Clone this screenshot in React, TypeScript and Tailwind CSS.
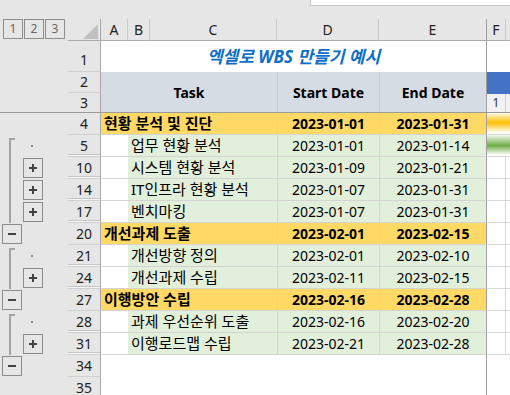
import React from "react";

type Kind = "sum" | "sub" | "empty";
type Out1 = "" | "start" | "line" | "minus";
type Out2 = "" | "plus" | "dot";
type Gantt = "" | "orange" | "green" | "grid";

interface SheetRow {
  n: number;
  kind: Kind;
  task?: string;
  start?: string;
  end?: string;
  o1: Out1;
  o2: Out2;
  hiddenAfter?: boolean;
  gantt: Gantt;
}

const ROWS: SheetRow[] = [
  { n: 4, kind: "sum", task: "현황 분석 및 진단", start: "2023-01-01", end: "2023-01-31", o1: "", o2: "", gantt: "orange" },
  { n: 5, kind: "sub", task: "업무 현황 분석", start: "2023-01-01", end: "2023-01-14", o1: "start", o2: "dot", hiddenAfter: true, gantt: "green" },
  { n: 10, kind: "sub", task: "시스템 현황 분석", start: "2023-01-09", end: "2023-01-21", o1: "line", o2: "plus", hiddenAfter: true, gantt: "grid" },
  { n: 14, kind: "sub", task: "IT인프라 현황 분석", start: "2023-01-07", end: "2023-01-31", o1: "line", o2: "plus", hiddenAfter: true, gantt: "grid" },
  { n: 17, kind: "sub", task: "벤치마킹", start: "2023-01-07", end: "2023-01-31", o1: "line", o2: "plus", hiddenAfter: true, gantt: "grid" },
  { n: 20, kind: "sum", task: "개선과제 도출", start: "2023-02-01", end: "2023-02-15", o1: "minus", o2: "", gantt: "grid" },
  { n: 21, kind: "sub", task: "개선방향 정의", start: "2023-02-01", end: "2023-02-10", o1: "start", o2: "dot", hiddenAfter: true, gantt: "grid" },
  { n: 24, kind: "sub", task: "개선과제 수립", start: "2023-02-11", end: "2023-02-15", o1: "line", o2: "plus", hiddenAfter: true, gantt: "grid" },
  { n: 27, kind: "sum", task: "이행방안 수립", start: "2023-02-16", end: "2023-02-28", o1: "minus", o2: "", gantt: "grid" },
  { n: 28, kind: "sub", task: "과제 우선순위 도출", start: "2023-02-16", end: "2023-02-20", o1: "start", o2: "dot", hiddenAfter: true, gantt: "grid" },
  { n: 31, kind: "sub", task: "이행로드맵 수립", start: "2023-02-21", end: "2023-02-28", o1: "line", o2: "plus", hiddenAfter: true, gantt: "grid" },
  { n: 34, kind: "empty", o1: "minus", o2: "", gantt: "" },
  { n: 35, kind: "empty", o1: "", o2: "", gantt: "" },
];

function OutlineBox({ sign, className = "" }: { sign: "plus" | "minus"; className?: string }) {
  return (
    <div className={`flex h-[20px] w-[20px] items-center justify-center border border-[#8c8c8c] ${className}`}>
      <svg width="8" height="8" viewBox="0 0 8 8">
        <path d={sign === "plus" ? "M0 4h8M4 0v8" : "M0 4h8"} stroke="#444" strokeWidth="2" />
      </svg>
    </div>
  );
}

function Gutter({ o1, o2 }: { o1: Out1; o2: Out2 }) {
  return (
    <div className="flex h-full w-[68px] shrink-0">
      <div className="flex h-full w-[23px] items-center">
        {o1 === "start" && (
          <div className="h-full pl-[9px] pt-[3px]">
            <div className="h-full w-[6px] border-l-2 border-t-2 border-[#a3a3a3]" />
          </div>
        )}
        {o1 === "line" && <div className="ml-[9px] h-full border-l-2 border-[#a3a3a3]" />}
        {o1 === "minus" && <OutlineBox sign="minus" className="ml-[2px]" />}
      </div>
      <div className="flex h-full w-[21px] items-center">
        {o2 === "plus" && <OutlineBox sign="plus" />}
        {o2 === "dot" && <div className="ml-[8px] h-[2px] w-[2px] bg-[#8a8a8a]" />}
      </div>
    </div>
  );
}

function RowHead({ n, hiddenAfter }: { n: number; hiddenAfter?: boolean }) {
  return (
    <div
      className={`flex h-full w-[33px] shrink-0 items-center justify-center border-b border-r border-b-[#d0d0d0] border-r-[#a8a8a8] text-[14px] leading-[20px] text-[#222] ${
        hiddenAfter ? "shadow-[inset_0_-1px_0_#f7f7f7,inset_0_-2px_0_#c4c4c4]" : ""
      }`}
    >
      {n}
    </div>
  );
}

function GanttCells({ g }: { g: Gantt }) {
  if (g === "orange")
    return <div className="h-full flex-1 border-b border-[#d9d9d9] bg-[linear-gradient(to_bottom,#fffbe8_0%,#ffc000_45%,#ffffff_95%)]" />;
  if (g === "green")
    return <div className="h-full flex-1 border-b border-[#d9d9d9] bg-[linear-gradient(to_bottom,#f4f9f0_0%,#70ad47_50%,#ffffff_95%)]" />;
  if (g === "grid")
    return (
      <div className="flex h-full flex-1 bg-white">
        <div className="h-full w-[19px] border-b border-r border-[#d9d9d9]" />
        <div className="h-full flex-1 border-b border-[#d9d9d9]" />
      </div>
    );
  return <div className="h-full flex-1 bg-white" />;
}

function DataRow({ row }: { row: SheetRow }) {
  const line = "border-[#d4d4d4]";
  return (
    <div className="flex h-[22px]">
      <Gutter o1={row.o1} o2={row.o2} />
      <RowHead n={row.n} hiddenAfter={row.hiddenAfter} />
      {row.kind === "sum" && (
        <>
          <div className={`flex h-full w-[176px] items-center border-b ${line} bg-[#ffd966] pl-[3px] text-[15px] font-bold`}>{row.task}</div>
          <div className={`flex h-full w-[102px] items-center justify-center border-b border-l ${line} bg-[#ffd966] font-bold`}>{row.start}</div>
          <div className={`flex h-full w-[108px] items-center justify-center border-b border-l border-r ${line} border-r-[#a0a0a0] bg-[#ffd966] font-bold`}>{row.end}</div>
        </>
      )}
      {row.kind === "sub" && (
        <>
          <div className={`h-full w-[27px] border-b ${line} bg-white`} />
          <div className={`flex h-full w-[149px] items-center border-b ${line} bg-[#e2efda] pl-[3px] text-[15px]`}>{row.task}</div>
          <div className={`flex h-full w-[102px] items-center justify-center border-b border-l ${line} bg-[#e2efda]`}>{row.start}</div>
          <div className={`flex h-full w-[108px] items-center justify-center border-b border-l border-r ${line} border-r-[#a0a0a0] bg-[#e2efda]`}>{row.end}</div>
        </>
      )}
      {row.kind === "empty" && <div className="h-full w-[386px] border-r border-[#a0a0a0] bg-white" />}
      <GanttCells g={row.gantt} />
    </div>
  );
}

const COLS: [string, string][] = [
  ["A", "w-[27px]"],
  ["B", "w-[22px]"],
  ["C", "w-[127px]"],
  ["D", "w-[102px]"],
];

export default function App() {
  return (
    <div className="h-[395px] w-full overflow-hidden bg-[#e6e6e6] font-['Noto_Sans','Noto_Sans_CJK_KR',sans-serif] text-[14px] text-black">
      {/* formula bar edge */}
      <div className="flex h-[19px] justify-end">
        <div className="h-[6px] w-[200px] border-b border-l border-[#c6c6c6] bg-white" />
      </div>

      {/* column headers */}
      <div className="flex h-[22px]">
        <div className="flex w-[68px] shrink-0 gap-[1px] pl-[3px]">
          {["1", "2", "3"].map((l) => (
            <div key={l} className="flex h-[20px] w-[20px] items-center justify-center border border-[#8d8d8d] text-[12px] text-[#666]">
              {l}
            </div>
          ))}
        </div>
        <div className="flex w-[33px] shrink-0 items-end justify-end border-b border-r border-b-[#ababab] border-r-[#a8a8a8] pb-[1px] pr-[2px]">
          <svg width="15" height="15" viewBox="0 0 15 15">
            <polygon points="15,0 15,15 0,15" fill="#c0c0c0" />
          </svg>
        </div>
        {COLS.map(([c, w]) => (
          <div key={c} className={`flex h-full ${w} items-center justify-center border-b border-r border-b-[#ababab] border-r-[#cacaca] text-[#222]`}>
            {c}
          </div>
        ))}
        <div className="flex h-full w-[108px] items-center justify-center border-b border-r border-b-[#ababab] border-r-[#a0a0a0] text-[#222]">E</div>
        <div className="flex h-full w-[19px] items-center justify-center border-b border-r border-b-[#ababab] border-r-[#cacaca] text-[#222]">F</div>
        <div className="h-full flex-1 border-b border-[#ababab]" />
      </div>

      {/* row 1: title */}
      <div className="flex h-[31px]">
        <div className="w-[68px] shrink-0" />
        <div className="flex h-full w-[33px] shrink-0 items-end justify-center border-b border-r border-b-[#d0d0d0] border-r-[#a8a8a8] pb-[1px] leading-[20px] text-[#222]">
          1
        </div>
        <div className="flex h-full w-[386px] items-center justify-center border-r border-[#a0a0a0] bg-white text-[17px] font-bold italic text-[#0f6fc6]">
          엑셀로 WBS 만들기 예시
        </div>
        <div className="h-full flex-1 bg-white" />
      </div>

      {/* rows 2-3: table header */}
      <div className="flex h-[41px] border-b border-[#9a9a9a]">
        <div className="w-[68px] shrink-0" />
        <div className="flex w-[33px] shrink-0 flex-col border-r border-[#a8a8a8] leading-[20px] text-[#222]">
          <div className="flex h-[22px] items-center justify-center border-b border-[#d0d0d0]">2</div>
          <div className="flex flex-1 items-center justify-center">3</div>
        </div>
        <div className="flex w-[176px] items-center justify-center bg-[#d6dce4] font-bold">Task</div>
        <div className="flex w-[102px] items-center justify-center border-l border-[#c8cdd4] bg-[#d6dce4] font-bold">Start Date</div>
        <div className="flex w-[108px] items-center justify-center border-l border-r border-[#c8cdd4] border-r-[#a0a0a0] bg-[#d6dce4] font-bold">
          End Date
        </div>
        <div className="flex flex-1 flex-col">
          <div className="h-[22px] bg-[#4472c4]" />
          <div className="flex flex-1 bg-[#f2f2f2]">
            <div className="flex w-[19px] items-center justify-center border-r border-[#d0d0d0] text-[12px] text-[#333]">1</div>
          </div>
        </div>
      </div>

      {ROWS.map((r) => (
        <DataRow key={r.n} row={r} />
      ))}
    </div>
  );
}
